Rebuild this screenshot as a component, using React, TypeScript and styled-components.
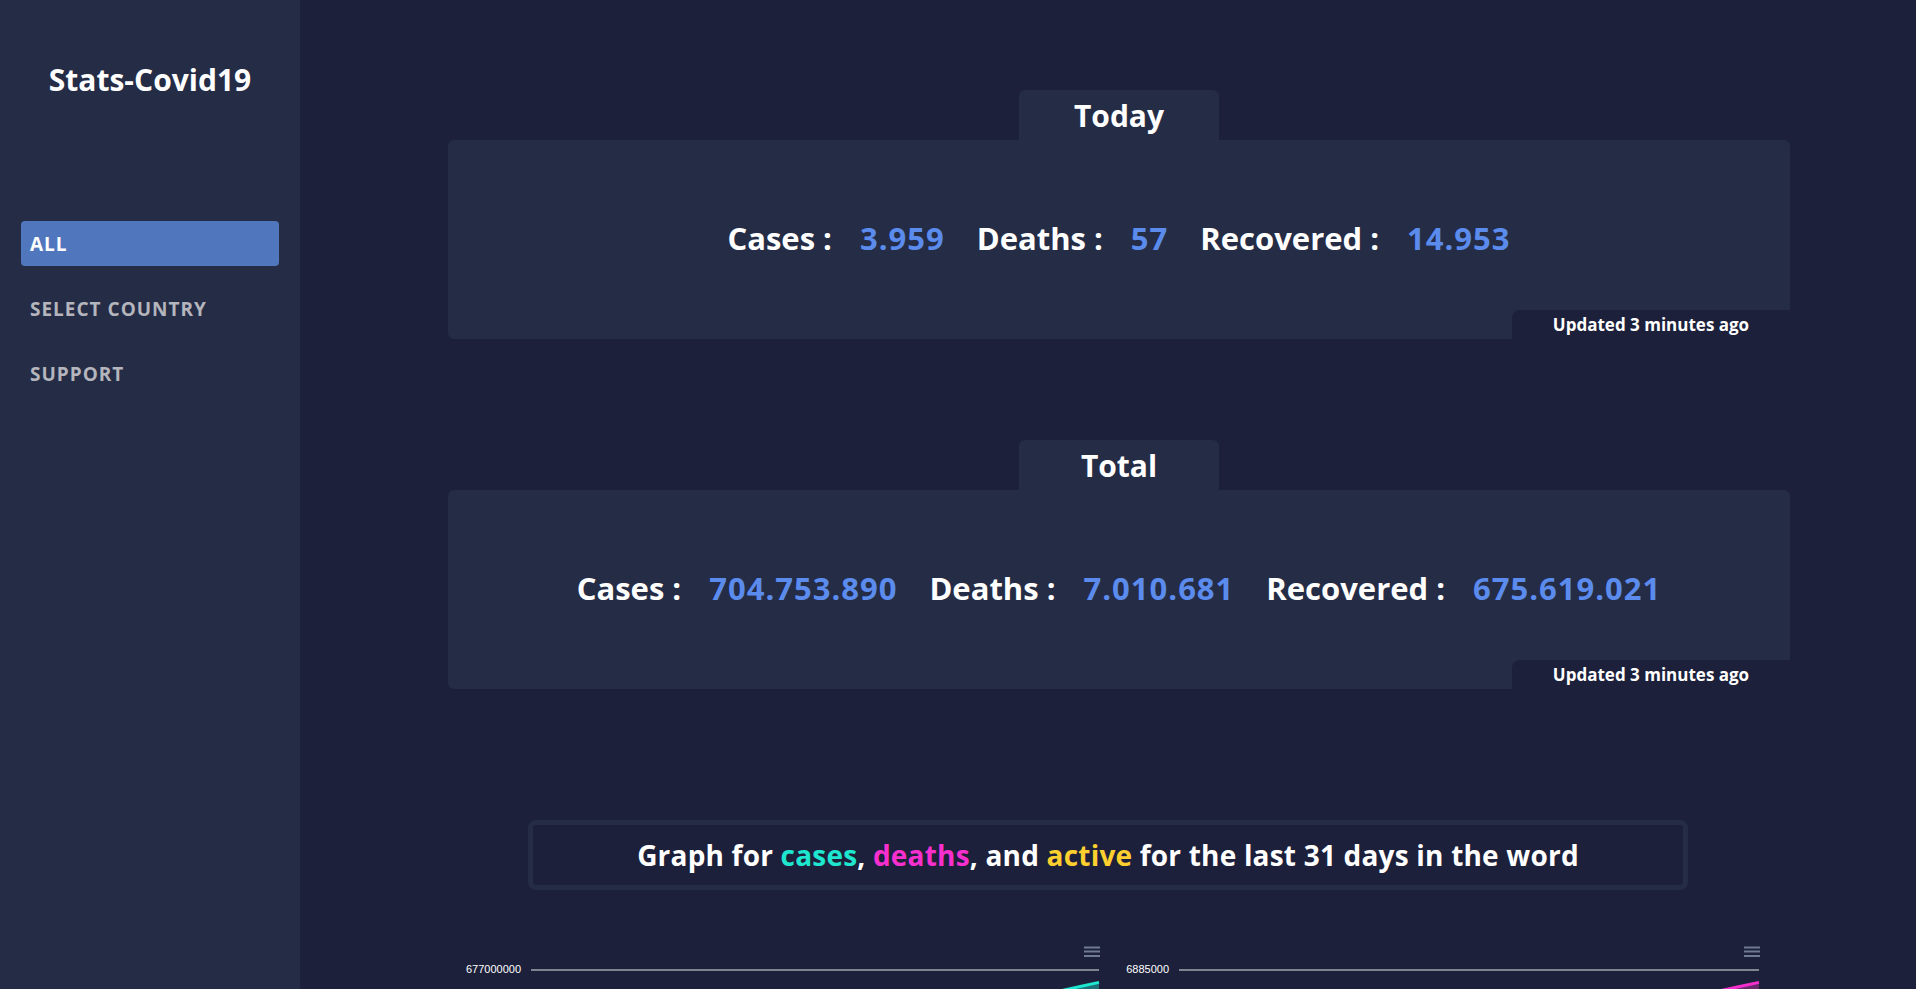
import React from "react";
import styled, { createGlobalStyle } from "styled-components";

const C = {
  bg: "#1c203a",
  panel: "#252c46",
  blue: "#5b8ced",
  btn: "#5077be",
  muted: "#b4b5bd",
  cyan: "#1ee6cf",
  pink: "#f72fcf",
  yellow: "#fdd02f",
};

const GlobalStyle = createGlobalStyle`
  * { box-sizing: border-box; }
  html, body { margin: 0; padding: 0; background: ${C.bg}; }
  body { font-family: "Open Sans", Lato, sans-serif; color: #fff; }
`;

const Layout = styled.div`
  display: flex;
  min-height: 100vh;
`;

const Sidebar = styled.aside`
  width: 300px;
  flex-shrink: 0;
  height: 100vh;
  position: sticky;
  top: 0;
  background: ${C.panel};
  padding: 62px 21px 0;
  display: flex;
  flex-direction: column;
`;

const Brand = styled.h1`
  margin: 0;
  font-size: 30px;
  line-height: 36px;
  font-weight: 700;
  text-align: center;
`;

const Nav = styled.nav`
  margin-top: 123px;
  display: flex;
  flex-direction: column;
  gap: 20px;
`;

const NavItem = styled.a<{ $active?: boolean }>`
  display: flex;
  align-items: center;
  height: 45px;
  padding: 0 9px;
  border-radius: 4px;
  font-size: 19px;
  letter-spacing: 1px;
  font-weight: 700;
  text-transform: uppercase;
  text-decoration: none;
  background: ${(p) => (p.$active ? C.btn : "transparent")};
  color: ${(p) => (p.$active ? "#fff" : C.muted)};
`;

const Main = styled.main`
  flex: 1;
  min-width: 0;
  padding: 90px 0 80px;
  display: flex;
  flex-direction: column;
`;

const StatSection = styled.section<{ $top?: number }>`
  margin: ${(p) => p.$top ?? 0}px 126px 0 148px;
  display: flex;
  flex-direction: column;
  align-items: center;
`;

const Tab = styled.div`
  width: 200px;
  height: 50px;
  background: ${C.panel};
  border-radius: 6px 6px 0 0;
  display: flex;
  align-items: center;
  justify-content: center;
  font-size: 30px;
  font-weight: 700;
`;

const Card = styled.div`
  align-self: stretch;
  position: relative;
  height: 199px;
  background: ${C.panel};
  border-radius: 6px;
  overflow: hidden;
  display: flex;
  align-items: center;
  justify-content: center;
`;

const StatsRow = styled.div`
  display: flex;
  align-items: baseline;
  font-size: 31px;
  font-weight: 700;
  margin-top: -4px;
`;

const StatLabel = styled.span`
  margin-right: 28px;
`;

const StatValue = styled.span`
  color: ${C.blue};
  letter-spacing: 1px;
  margin-right: 32px;
  &:last-child {
    margin-right: 0;
  }
`;

const Updated = styled.div`
  position: absolute;
  right: 0;
  bottom: 0;
  width: 278px;
  height: 29px;
  background: ${C.bg};
  border-top-left-radius: 8px;
  display: flex;
  align-items: center;
  justify-content: center;
  font-size: 17px;
  font-weight: 700;
`;

const GraphTitle = styled.h2`
  align-self: center;
  margin: 131px 0 0;
  width: 1160px;
  height: 70px;
  border: 5px solid ${C.panel};
  border-radius: 8px;
  display: flex;
  align-items: center;
  justify-content: center;
  font-size: 28px;
  letter-spacing: 0.2px;
  font-weight: 700;
`;

const Accent = styled.span<{ $color: string }>`
  color: ${(p) => p.$color};
`;

const Charts = styled.div`
  margin: 56px 0 0 140px;
  display: grid;
  grid-template-columns: 660px 660px;
`;

const ChartBox = styled.div`
  display: flex;
  flex-direction: column;
`;

const ChartToolbar = styled.div`
  height: 12px;
  display: flex;
  justify-content: flex-end;
`;

const ChartSvg = styled.svg`
  display: block;
  font-family: "Liberation Sans", Arial, sans-serif;
`;

const MenuIcon = () => (
  <svg width="16" height="12" viewBox="0 0 16 12">
    <g stroke="#6e7b90" strokeWidth="2">
      <line x1="0" y1="1.5" x2="16" y2="1.5" />
      <line x1="0" y1="5.5" x2="16" y2="5.5" />
      <line x1="0" y1="10" x2="16" y2="10" />
    </g>
  </svg>
);

type ChartProps = {
  label: string;
  plotLeft: number;
  line: string;
  fill: string;
};

const W = 660;
const H = 380;

const Chart = ({ label, plotLeft, line, fill }: ChartProps) => {
  const right = W - 1;
  const step = (right - plotLeft) / 30;
  const pts = Array.from({ length: 31 }, (_, i) => {
    const x = plotLeft + i * step;
    const y = 23 + (30 - i) * 5.5 + Math.sin(i * 1.3) * 1.5;
    return [x, y] as const;
  });
  const lineD = pts.map(([x, y], i) => `${i ? "L" : "M"}${x.toFixed(1)},${y.toFixed(1)}`).join(" ");
  const areaD = `${lineD} L${right},${H} L${plotLeft},${H} Z`;
  const grids = [12, 76, 140, 204, 268, 332];
  return (
    <ChartBox>
      <ChartToolbar>
        <MenuIcon />
      </ChartToolbar>
      <ChartSvg width={W} height={H}>
        {grids.map((g) => (
          <line key={g} x1={plotLeft} x2={right} y1={g} y2={g} stroke="#80848f" strokeWidth="2" />
        ))}
        <text x={plotLeft - 10} y={15} textAnchor="end" fontSize="11" fill="#fff">
          {label}
        </text>
        <path d={areaD} fill={fill} />
        <path d={lineD} fill="none" stroke={line} strokeWidth="3" />
      </ChartSvg>
    </ChartBox>
  );
};

const stats = [
  {
    title: "Today",
    top: 0,
    items: [
      ["Cases :", "3.959"],
      ["Deaths :", "57"],
      ["Recovered :", "14.953"],
    ],
  },
  {
    title: "Total",
    top: 101,
    items: [
      ["Cases :", "704.753.890"],
      ["Deaths :", "7.010.681"],
      ["Recovered :", "675.619.021"],
    ],
  },
];

export default function App() {
  return (
    <>
      <GlobalStyle />
      <Layout>
        <Sidebar>
          <Brand>Stats-Covid19</Brand>
          <Nav>
            <NavItem $active>All</NavItem>
            <NavItem>Select Country</NavItem>
            <NavItem>Support</NavItem>
          </Nav>
        </Sidebar>
        <Main>
          {stats.map((s) => (
            <StatSection key={s.title} $top={s.top}>
              <Tab>{s.title}</Tab>
              <Card>
                <StatsRow>
                  {s.items.map(([l, v]) => (
                    <React.Fragment key={l}>
                      <StatLabel>{l}</StatLabel>
                      <StatValue>{v}</StatValue>
                    </React.Fragment>
                  ))}
                </StatsRow>
                <Updated>Updated 3 minutes ago</Updated>
              </Card>
            </StatSection>
          ))}
          <GraphTitle>
            Graph for&nbsp;<Accent $color={C.cyan}>cases</Accent>,&nbsp;
            <Accent $color={C.pink}>deaths</Accent>, and&nbsp;
            <Accent $color={C.yellow}>active</Accent>&nbsp;for the last 31 days in the word
          </GraphTitle>
          <Charts>
            <Chart label="677000000" plotLeft={91} line={C.cyan} fill="#1d6f78" />
            <Chart label="6885000" plotLeft={79} line={C.pink} fill="#6b2a6e" />
          </Charts>
        </Main>
      </Layout>
    </>
  );
}
